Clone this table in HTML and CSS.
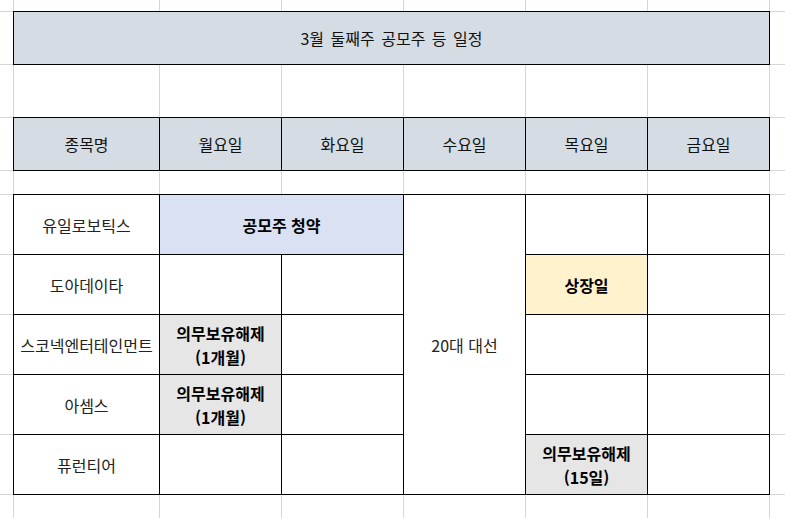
FILE: index.html
```html
<!DOCTYPE html>
<html lang="ko">
<head>
<meta charset="utf-8">
<title>3월 둘째주 공모주 등 일정</title>
<link rel="stylesheet" href="styles.css">
</head>
<body>
<div class="sheet">
  <div class="title">3월 둘째주 공모주 등 일정</div>

  <div class="head-row">
    <div class="cell head">종목명</div>
    <div class="cell head">월요일</div>
    <div class="cell head">화요일</div>
    <div class="cell head">수요일</div>
    <div class="cell head">목요일</div>
    <div class="cell head">금요일</div>
  </div>

  <div class="table">
    <div class="cell">유일로보틱스</div>
    <div class="cell bold sub span2">공모주 청약</div>
    <div class="cell span5">20대 대선</div>
    <div class="cell"></div>
    <div class="cell"></div>

    <div class="cell">도아데이타</div>
    <div class="cell"></div>
    <div class="cell"></div>
    <div class="cell bold list">상장일</div>
    <div class="cell"></div>

    <div class="cell">스코넥엔터테인먼트</div>
    <div class="cell bold lock">의무보유해제<br>(1개월)</div>
    <div class="cell"></div>
    <div class="cell"></div>
    <div class="cell"></div>

    <div class="cell">아셈스</div>
    <div class="cell bold lock">의무보유해제<br>(1개월)</div>
    <div class="cell"></div>
    <div class="cell"></div>
    <div class="cell"></div>

    <div class="cell">퓨런티어</div>
    <div class="cell"></div>
    <div class="cell"></div>
    <div class="cell bold lock">의무보유해제<br>(15일)</div>
    <div class="cell"></div>
  </div>
</div>
</body>
</html>
```

FILE: styles.css
```css
html, body {
  margin: 0;
  padding: 0;
  background: #fff;
}

body {
  width: 785px;
  height: 518px;
  overflow: hidden;
  font-family: "Noto Sans CJK KR", "Noto Sans", sans-serif;
  font-size: 16px;
  color: #222;
}

.sheet {
  width: 785px;
  height: 518px;
  box-sizing: border-box;
  padding: 11px 0 0 13px;
  background:
    linear-gradient(#d6d6d6, #d6d6d6) 13px 0 / 1px 100% no-repeat,
    linear-gradient(#d6d6d6, #d6d6d6) 159px 0 / 1px 100% no-repeat,
    linear-gradient(#d6d6d6, #d6d6d6) 281px 0 / 1px 100% no-repeat,
    linear-gradient(#d6d6d6, #d6d6d6) 403px 0 / 1px 100% no-repeat,
    linear-gradient(#d6d6d6, #d6d6d6) 525px 0 / 1px 100% no-repeat,
    linear-gradient(#d6d6d6, #d6d6d6) 647px 0 / 1px 100% no-repeat,
    linear-gradient(#d6d6d6, #d6d6d6) 769px 0 / 1px 100% no-repeat,
    linear-gradient(#d6d6d6, #d6d6d6) 0 11px / 100% 1px no-repeat,
    linear-gradient(#d6d6d6, #d6d6d6) 0 64px / 100% 1px no-repeat,
    linear-gradient(#d6d6d6, #d6d6d6) 0 117px / 100% 1px no-repeat,
    linear-gradient(#d6d6d6, #d6d6d6) 0 170px / 100% 1px no-repeat,
    linear-gradient(#d6d6d6, #d6d6d6) 0 194px / 100% 1px no-repeat,
    linear-gradient(#d6d6d6, #d6d6d6) 0 254px / 100% 1px no-repeat,
    linear-gradient(#d6d6d6, #d6d6d6) 0 314px / 100% 1px no-repeat,
    linear-gradient(#d6d6d6, #d6d6d6) 0 374px / 100% 1px no-repeat,
    linear-gradient(#d6d6d6, #d6d6d6) 0 434px / 100% 1px no-repeat,
    linear-gradient(#d6d6d6, #d6d6d6) 0 494px / 100% 1px no-repeat,
    #fff;
}

.title {
  width: 757px;
  height: 54px;
  box-sizing: border-box;
  border: 1px solid #000;
  background: #d6dce4;
  display: flex;
  align-items: center;
  justify-content: center;
  word-spacing: 2px;
  color: #111;
}

.head-row,
.table {
  display: grid;
  grid-template-columns: 146px repeat(5, 122px);
  width: 756px;
}

.head-row {
  margin-top: 52px;
  grid-template-rows: 53px;
}

.table {
  margin-top: 24px;
  grid-template-rows: repeat(5, 60px);
}

.cell {
  margin: 0 -1px -1px 0;
  border: 1px solid #000;
  background: #fff;
  display: flex;
  align-items: center;
  justify-content: center;
  text-align: center;
  line-height: 24px;
  white-space: nowrap;
}

.head {
  background: #d6dce4;
  color: #111;
}

.bold {
  font-weight: 700;
  color: #000;
}

.sub {
  background: #d9e1f2;
}

.list {
  background: #fff2cc;
}

.lock {
  background: #e7e6e6;
}

.span2 {
  grid-column: span 2;
}

.span5 {
  grid-row: span 5;
}
```
